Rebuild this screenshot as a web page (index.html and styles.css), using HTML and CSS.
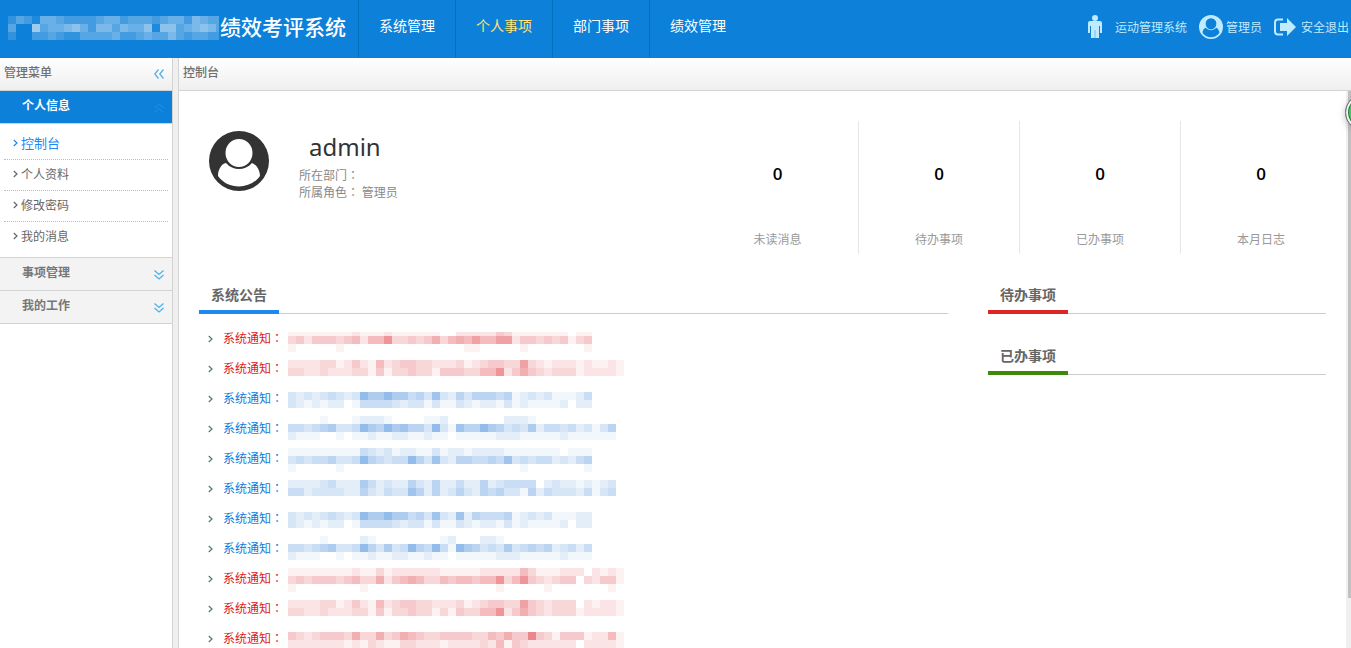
FILE: index.html
```html
<!DOCTYPE html>
<html lang="zh-CN">
<head>
<meta charset="utf-8">
<title>绩效考评系统</title>
<link rel="stylesheet" href="styles.css">
</head>
<body>
<svg class="symbols" aria-hidden="true">
  <symbol id="user" viewBox="0 0 60 60"><path fill="currentColor" fill-rule="evenodd" d="M30 0a30 30 0 1 0 0 60a30 30 0 1 0 0-60zM30 8a13 13.500 0 1 1 0 28a13 13.500 0 1 1 0-28zM17 32c7 8 19 8 26 0c5 2 8 8 8 13c-10 14-32 14-42 0c0-6 3-12 8-13z"/></symbol>
  <symbol id="double-down" viewBox="0 0 10 10"><path fill="none" stroke="currentColor" stroke-width="1.300" d="M0.500 0.500L5 4.500L9.500 0.500M0.500 5L5 9L9.500 5"/></symbol>
  <symbol id="angle" viewBox="0 0 5 8"><path fill="none" stroke="currentColor" stroke-width="1.200" d="M0.800 1L4 4L0.800 7"/></symbol>
</svg>

<header class="topbar">
  <div class="brand">
    <svg class="mosaic brand-mosaic" viewBox="0 0 211 24" data-tone="white" data-top="0" data-rows="243155433334553444345536544|400845567536646557177456764|200334322444453345446434433" aria-hidden="true"></svg>
    <h1 class="brand-name">绩效考评系统</h1>
  </div>
  <nav class="nav">
    <a class="nav-link" href="#">系统管理</a>
    <a class="nav-link active" href="#">个人事项</a>
    <a class="nav-link" href="#">部门事项</a>
    <a class="nav-link" href="#">绩效管理</a>
  </nav>
  <div class="tools">
    <a class="tool tool-wide" href="#"><svg width="16" height="24" viewBox="0 0 16 24"><circle cx="8" cy="3" r="3" fill="currentColor"/><path fill="currentColor" d="M3 6h10q2 0 2 2v10h-2V11h-1v12H4V11H3v7H1V8q0-2 2-2z"/><path stroke="#4fb0e8" stroke-width="0.700" d="M8 15v8"/></svg>运动管理系统</a>
    <a class="tool" href="#"><svg width="24" height="24"><use href="#user"/></svg>管理员</a>
    <a class="tool tool-exit" href="#"><svg width="22" height="18" viewBox="0 0 22 18"><path fill="none" stroke="currentColor" stroke-width="2" d="M9 1.500H4Q1 1.500 1 4.500v9q0 3 3 3h5"/><path fill="currentColor" d="M6 5h7V0l9 9l-9 9v-5H6z"/></svg>安全退出</a>
  </div>
</header>

<div class="layout">
  <aside class="sidebar">
    <div class="bar">管理菜单
      <button class="collapse" type="button" aria-label="收起菜单"><svg width="10" height="10" viewBox="0 0 10 10"><path fill="none" stroke="currentColor" stroke-width="1.300" d="M4.500 0.500L0.800 5L4.500 9.500M9.500 0.500L5.800 5L9.500 9.500"/></svg></button>
    </div>
    <button class="group open" type="button">个人信息<svg class="flip" width="10" height="10"><use href="#double-down"/></svg></button>
    <ul class="menu">
      <li><a class="menu-link current" href="#"><svg width="5" height="8"><use href="#angle"/></svg>控制台</a></li>
      <li><a class="menu-link" href="#"><svg width="5" height="8"><use href="#angle"/></svg>个人资料</a></li>
      <li><a class="menu-link" href="#"><svg width="5" height="8"><use href="#angle"/></svg>修改密码</a></li>
      <li><a class="menu-link" href="#"><svg width="5" height="8"><use href="#angle"/></svg>我的消息</a></li>
    </ul>
    <button class="group" type="button">事项管理<svg width="10" height="10"><use href="#double-down"/></svg></button>
    <button class="group" type="button">我的工作<svg width="10" height="10"><use href="#double-down"/></svg></button>
  </aside>
  <div class="splitter"></div>
  <main class="main">
    <div class="bar">控制台</div>
    <div class="viewport">
      <div class="content">
        <section class="summary">
          <svg class="avatar" width="60" height="60"><use href="#user"/></svg>
          <div class="profile">
            <h2 class="username">admin</h2>
            <p>所在部门<span class="colon" lang="zh-TW">：</span></p>
            <p>所属角色<span class="colon" lang="zh-TW">：</span> 管理员</p>
          </div>
          <div class="stats">
            <div class="stat"><strong>0</strong><span>未读消息</span></div>
            <div class="stat"><strong>0</strong><span>待办事项</span></div>
            <div class="stat"><strong>0</strong><span>已办事项</span></div>
            <div class="stat"><strong>0</strong><span>本月日志</span></div>
          </div>
        </section>
        <div class="panels">
          <section>
            <h3 class="heading"><span class="blue">系统公告</span></h3>
            <ul class="notices" id="notices"></ul>
          </section>
          <section class="side">
            <h3 class="heading"><span class="red">待办事项</span></h3>
            <h3 class="heading"><span class="green">已办事项</span></h3>
          </section>
        </div>
      </div>
      <div class="scrollbar"><div class="thumb"></div></div>
    </div>
  </main>
</div>
<div class="float-ball"></div>
<script src="app.js"></script>
</body>
</html>
```
FILE: styles.css
```css
* { box-sizing: border-box; }
body {
  margin: 0;
  height: 100vh;
  display: flex;
  flex-direction: column;
  overflow: hidden;
  position: relative;
  background: #fff;
  color: #808080;
  font: 12px/18px "Noto Sans CJK SC", sans-serif;
}
h1, h2, h3, p, ul { margin: 0; padding: 0; }
ul { list-style: none; }
a { color: inherit; text-decoration: none; }
button { font: inherit; border: 0; background: none; padding: 0; color: inherit; }
svg { flex: none; }
.symbols { position: absolute; width: 0; height: 0; }
.mosaic { display: block; shape-rendering: crispEdges; }

.topbar { display: flex; flex: none; height: 58px; background: #0d80d9; color: #fff; }
.brand { display: flex; align-items: center; width: 358px; padding: 0 0 2px 8px; }
.brand-mosaic { width: 211px; height: 24px; }
.brand-name { padding: 0 0 4px 1px; font-size: 21px; line-height: 32px; font-weight: 500; white-space: nowrap; }
.nav { display: flex; }
.nav-link { width: 97px; padding-top: 15px; border-left: 1px solid #0071c0; text-align: center; font-size: 14px; line-height: 20px; }
.nav-link.active { color: #ffe27a; }
.tools { display: flex; align-items: center; gap: 12px; margin-left: auto; padding: 0 2px 4px 0; color: #bfeaff; }
.tool { display: flex; align-items: center; gap: 3px; white-space: nowrap; }
.tool-wide { gap: 12px; }
.tool-exit { gap: 5px; }

.layout { display: flex; flex: 1; min-height: 0; }
.sidebar { width: 173px; flex: none; border-right: 1px solid #d3d3d3; }
.splitter { width: 5px; flex: none; background: #efefef; }
.main { display: flex; flex-direction: column; flex: 1; min-width: 0; border-left: 1px solid #d3d3d3; }
.bar {
  display: flex;
  flex: none;
  justify-content: space-between;
  align-items: center;
  height: 33px;
  padding: 0 8px 4px 4px;
  border-bottom: 1px solid #d3d3d3;
  background: linear-gradient(#fff, #efefef);
  font-weight: 500;
  color: #707070;
}
.collapse { display: flex; padding-top: 3px; color: #55afe8; }
.group {
  display: flex;
  justify-content: space-between;
  align-items: center;
  width: 100%;
  height: 33px;
  padding: 0 8px 4px 22px;
  border-bottom: 1px solid #d3d3d3;
  background: #f3f3f3;
  font-weight: 700;
  color: #777;
}
.group svg { color: #4fb0ea; margin-top: 5px; }
.group.open { background: #0d80d9; color: #fff; }
.group.open svg { color: #168ce6; }
.flip { transform: rotate(180deg); }
.menu { padding: 5px 4px; border-bottom: 1px solid #d3d3d3; }
.menu li + li { border-top: 1px dotted #bbb; }
.menu-link { display: flex; align-items: center; gap: 3px; height: 30px; padding: 0 0 2px 9px; color: #666; }
.menu-link.current { font-size: 13px; color: #1e87f0; }

.viewport { display: flex; flex: 1; min-height: 0; }
.content { flex: 1; min-width: 0; padding: 30px 20px 0; }
.scrollbar { width: 5px; padding-left: 2px; background: #f0f0f0; }
.thumb { height: 91%; background: #c1c1c1; }
.summary { display: flex; height: 133px; margin-right: -15px; }
.avatar { margin: 10px 30px 0 10px; color: #333; }
.profile { padding-top: 8px; line-height: 17px; color: #888; }
.username { padding: 0 0 1px 10px; font: 400 24px/36px "Noto Sans", sans-serif; color: #333; }
.colon { font-family: "Noto Sans CJK TC", sans-serif; text-spacing-trim: space-all; }
.stats { display: flex; margin-left: auto; }
.stat { display: flex; flex-direction: column; justify-content: space-between; align-items: center; width: 161px; padding: 42px 0 6px; border-left: 1px solid #e6e6e6; color: #999; }
.stat:first-child { border-left: 0; }
.stat strong { font: 600 17px/22px "Open Sans", sans-serif; color: #000; }

.panels { display: grid; grid-template-columns: 1fr 30%; gap: 40px; padding-top: 26px; }
.side { display: grid; gap: 27px; align-content: start; }
.heading { display: flex; height: 34px; border-bottom: 1px solid #ccc; font-size: 14px; line-height: 28px; color: #666; }
.heading span { height: 34px; padding: 0 12px; border-bottom: 4px solid; }
.heading .blue { border-color: #1e87f0; }
.heading .red { border-color: #dd2727; }
.heading .green { border-color: #3c8a0a; }
.notices { padding-top: 10px; }
.notices a { display: flex; align-items: center; height: 30px; padding-left: 9px; color: #0d7bdc; }
.notices .label { padding-bottom: 2px; }
.notices .urgent { color: #dd2020; }
.notices .angle { margin-right: 10px; color: #557777; }
.notices .mosaic { width: 336px; height: 30px; margin-left: 5px; }
.float-ball {
  position: absolute;
  top: 94px;
  right: -31px;
  width: 37px;
  height: 37px;
  border: 1px solid #77717f;
  border-radius: 50%;
  background: #3cc95f;
  box-shadow: inset 0 0 0 2px #f3f0f3, inset 0 0 0 3px #256b38, 0 2px 7px #8888;
}
```
FILE: app.js
```js
const SVG = "http://www.w3.org/2000/svg";
const TONES = { red: "#d92228", blue: "#1c72d0", white: "#ffffff" };

// Each digit is the strength of one 8px block; rows are separated by "|".
function paint(svg) {
  const top = Number(svg.dataset.top);
  const clip = Number(svg.dataset.clip || 0);
  svg.dataset.rows.split("|").forEach((row, r) => {
    [...row].forEach((level, c) => {
      if (level === "0") return;
      const rect = document.createElementNS(SVG, "rect");
      const cut = r === 0 ? clip : 0;
      rect.setAttribute("x", c * 8);
      rect.setAttribute("y", top + r * 8 + cut);
      rect.setAttribute("width", 8);
      rect.setAttribute("height", 8 - cut);
      rect.setAttribute("fill", TONES[svg.dataset.tone]);
      rect.setAttribute("fill-opacity", level * (svg.dataset.tone === "white" ? 0.075 : 0.06));
      svg.append(rect);
    });
  });
}

// tone, top of the first block row, amount hidden of that row, block strengths
const notices = [
  ["red", 4, 4, "11111111211121111110022222431111111011|34244434525583343463565755772443434134|10000010000000000000001100000100000001"],
  ["red", 6, 0, "222233124215234433222312344337321222121121|332232223314133433144433558246432333122221"],
  ["blue", 8, 0, "32323432386686645373253555451232311124|32121220144443233131132122131211112022"],
  ["blue", 2, 0, "0000100012221000011200000002221|44345633486586755383175586534362443423135|21110010112112211211011111222111112111111"],
  ["blue", 4, 0, "11111111143231221131221222211111110111|34344533485434485373255445473434423245|10000010000000000000000000000100000001"],
  ["blue", 6, 0, "22223422264232253252242252344440232212123|44233332253243375252353254533152433324134"],
  ["blue", 8, 0, "32323432386686645373272544451232311122|32121220144443233131132122131211112022"],
  ["blue", 2, 0, "000010000210000000012000221|44345633485363485484186534363454523424|21110010112112211211011111222111112111"],
  ["red", 4, 0, "111111112113122222211111222225311122202121|343444345336245653354554558358432344032441|100000000100000000000000001000001000000010"],
  ["red", 6, 0, "222233124215234433222312344337432333021221|332232223314133433131433558246432333122221"],
  ["red", 8, 0, "432344436336346543344443354644943144412251|222222212132113322212222325143222222022221"]
];

const list = document.getElementById("notices");
notices.forEach(([tone, top, clip, rows]) => {
  const item = document.createElement("li");
  item.innerHTML = `<a href="#" class="${tone === "red" ? "urgent" : ""}"><svg class="angle" width="5" height="8"><use href="#angle"/></svg><span class="label">系统通知<span class="colon" lang="zh-TW">：</span></span><svg class="mosaic" viewBox="0 0 336 30" data-tone="${tone}" data-top="${top}" data-clip="${clip}" data-rows="${rows}" aria-hidden="true"></svg></a>`;
  list.append(item);
});
document.querySelectorAll(".mosaic").forEach(paint);
```
